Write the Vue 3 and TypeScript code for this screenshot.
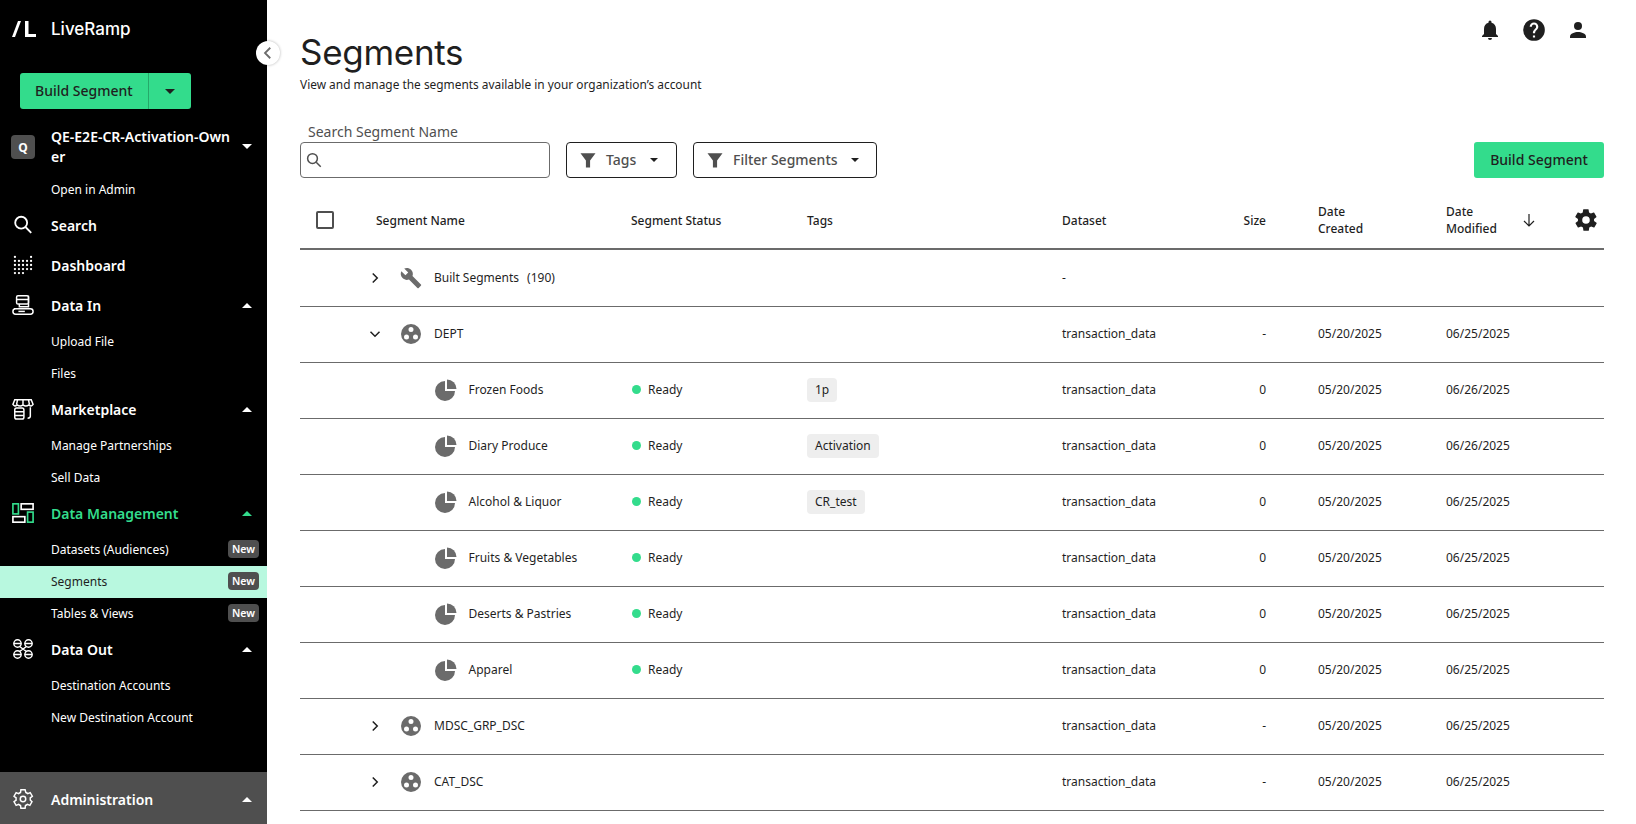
<script setup lang="ts">
interface SubItem { label: string; isNew?: boolean; active?: boolean }
interface Section { label: string; icon: string; items: SubItem[]; green?: boolean }
interface Row {
  name: string; kind: 'tool' | 'group' | 'pie'; open?: boolean; child?: boolean; count?: string;
  status?: string; tag?: string; dataset: string; size?: string; created?: string; modified?: string;
}

const sections: Section[] = [
  { label: 'Data In', icon: 'in', items: [{ label: 'Upload File' }, { label: 'Files' }] },
  { label: 'Marketplace', icon: 'market', items: [{ label: 'Manage Partnerships' }, { label: 'Sell Data' }] },
  {
    label: 'Data Management', icon: 'mgmt', green: true,
    items: [
      { label: 'Datasets (Audiences)', isNew: true },
      { label: 'Segments', isNew: true, active: true },
      { label: 'Tables & Views', isNew: true },
    ],
  },
  { label: 'Data Out', icon: 'out', items: [{ label: 'Destination Accounts' }, { label: 'New Destination Account' }] },
]

const dashDots: [number, number][] = []
const dashRows = [[1, 5], [1, 2, 3, 4, 5], [1, 2, 3, 4, 5], [1, 2, 3, 4, 5], [1, 2, 3]]
dashRows.forEach((cols, r) => cols.forEach((c) => dashDots.push([c * 4.4 - 1.2, r * 4.4 + 3.200])))

const d = 'transaction_data'
const rows: Row[] = [
  { name: 'Built Segments', count: '(190)', kind: 'tool', dataset: '-' },
  { name: 'DEPT', kind: 'group', open: true, dataset: d, size: '-', created: '05/20/2025', modified: '06/25/2025' },
  { name: 'Frozen Foods', kind: 'pie', child: true, status: 'Ready', tag: '1p', dataset: d, size: '0', created: '05/20/2025', modified: '06/26/2025' },
  { name: 'Diary Produce', kind: 'pie', child: true, status: 'Ready', tag: 'Activation', dataset: d, size: '0', created: '05/20/2025', modified: '06/26/2025' },
  { name: 'Alcohol & Liquor', kind: 'pie', child: true, status: 'Ready', tag: 'CR_test', dataset: d, size: '0', created: '05/20/2025', modified: '06/25/2025' },
  { name: 'Fruits & Vegetables', kind: 'pie', child: true, status: 'Ready', dataset: d, size: '0', created: '05/20/2025', modified: '06/25/2025' },
  { name: 'Deserts & Pastries', kind: 'pie', child: true, status: 'Ready', dataset: d, size: '0', created: '05/20/2025', modified: '06/25/2025' },
  { name: 'Apparel', kind: 'pie', child: true, status: 'Ready', dataset: d, size: '0', created: '05/20/2025', modified: '06/25/2025' },
  { name: 'MDSC_GRP_DSC', kind: 'group', dataset: d, size: '-', created: '05/20/2025', modified: '06/25/2025' },
  { name: 'CAT_DSC', kind: 'group', dataset: d, size: '-', created: '05/20/2025', modified: '06/25/2025' },
]
</script>

<template>
  <div class="page">
    <aside class="sidebar">
      <div class="brand">
        <svg class="logo" viewBox="0 0 24 16" width="24" height="16">
          <path d="M0 16 L6 0 H9 L3 16 Z" fill="#fff" />
          <path d="M13 0 H16.500 V13 H24 V16 H13 Z" fill="#fff" />
        </svg>
        <span class="brand-name">LiveRamp</span>
      </div>

      <div class="split-btn">
        <span class="split-label">Build Segment</span>
        <span class="split-caret"><i class="caret dark"></i></span>
      </div>

      <div class="org">
        <span class="org-badge">Q</span>
        <span class="org-name">QE-E2E-CR-Activation-Own<br />er</span>
        <i class="caret white org-caret"></i>
      </div>
      <a class="sub">Open in Admin</a>

      <div class="head">
        <svg class="nav-icon" viewBox="0 0 24 24" fill="none" stroke="#fff" stroke-width="2">
          <circle cx="10" cy="9.500" r="6.500" /><path d="M14.700 14.200 L21 20.500" />
        </svg>
        <span>Search</span>
      </div>
      <div class="head">
        <svg class="nav-icon" viewBox="0 0 24 24" fill="#fff">
          <circle v-for="(p, i) in dashDots" :key="i" :cx="p[0]" :cy="p[1]" r="1.250" />
        </svg>
        <span>Dashboard</span>
      </div>

      <template v-for="s in sections" :key="s.label">
        <div class="head" :class="{ green: s.green }">
          <svg v-if="s.icon === 'in'" class="nav-icon" viewBox="0 0 24 24" fill="none" stroke="#fff" stroke-width="1.600">
            <rect x="5" y="2" width="13" height="9" rx="1.500" />
            <path d="M5 6 H18 M8 11 V14 H18 V2" />
            <path d="M2 16 H20 Q23 16 23 19 Q23 22 20 22 H4 Q1 22 1 19 Q1 16 4 16" />
            <path d="M7 19 H14" />
          </svg>
          <svg v-else-if="s.icon === 'market'" class="nav-icon" viewBox="0 0 24 24" fill="none" stroke="#fff" stroke-width="1.600">
            <path d="M3 2 H21 L23 7 Q21 10 18.500 7.500 Q15 10 12 7.500 Q9 10 5.500 7.500 Q3 10 1 7 Z" />
            <path d="M6 2 L5 7 M12 2 V7 M18 2 L19 7" />
            <path d="M20 10 V20 Q20 22 17 22" />
            <rect x="3" y="11" width="10" height="12" rx="2" />
            <path d="M3 15 H13 M3 19 H13" />
          </svg>
          <svg v-else-if="s.icon === 'mgmt'" class="nav-icon" viewBox="0 0 24 24" fill="none" stroke-width="1.800">
            <rect x="1" y="2" width="6" height="11" stroke="#33dc8c" />
            <rect x="10" y="2" width="13" height="6" stroke="#fff" />
            <rect x="1" y="16" width="13" height="6" stroke="#fff" />
            <rect x="17" y="11" width="6" height="11" stroke="#33dc8c" />
          </svg>
          <svg v-else class="nav-icon" viewBox="0 0 24 24" fill="none" stroke="#fff" stroke-width="1.600">
            <circle cx="6" cy="6" r="4" /><circle cx="18" cy="6" r="4" />
            <circle cx="6" cy="18" r="4" /><circle cx="18" cy="18" r="4" />
            <path d="M2 6 H10 M14 6 H22 M2 18 H10 M14 18 H22 M8 9 L12 12 L16 9 M8 15 L12 12 L16 15" />
          </svg>
          <span>{{ s.label }}</span>
          <i class="caret up" :class="s.green ? 'greenc' : 'white'"></i>
        </div>
        <a v-for="it in s.items" :key="it.label" class="sub" :class="{ active: it.active }">
          {{ it.label }}
          <b v-if="it.isNew" class="new">New</b>
        </a>
      </template>

      <div class="head admin">
        <svg class="nav-icon" viewBox="0 0 24 24" fill="none" stroke="#fff" stroke-width="1.600">
          <path d="M19.900 13.200a8 8 0 0 0 0-2.400l2.300-1.800-2.300-4-2.700 1.100a8 8 0 0 0-2.100-1.200L14.300 2H9.700l-.4 2.900a8 8 0 0 0-2.100 1.200L4.500 5l-2.300 4 2.300 1.800a8 8 0 0 0 0 2.400L2.200 15l2.300 4 2.700-1.100a8 8 0 0 0 2.100 1.200l.4 2.900h4.600l.4-2.900a8 8 0 0 0 2.100-1.200l2.700 1.100 2.300-4z" />
          <circle cx="12" cy="12" r="3" />
        </svg>
        <span>Administration</span>
        <i class="caret up white"></i>
      </div>
    </aside>

    <button class="collapse" aria-label="Collapse">
      <svg viewBox="0 0 24 24" width="18" height="18" fill="none" stroke="#6b6b6b" stroke-width="2.400">
        <path d="M15 5 L8 12 L15 19" />
      </svg>
    </button>

    <main class="main">
      <div class="top-icons">
        <svg viewBox="0 0 24 24" width="24" height="24" fill="#1f1f1f">
          <path d="M12 22a2 2 0 0 0 2-2h-4a2 2 0 0 0 2 2zm6-6v-5c0-3.100-1.600-5.600-4.500-6.300V4a1.500 1.500 0 0 0-3 0v.7C7.600 5.400 6 7.900 6 11v5l-2 2v1h16v-1z" />
        </svg>
        <svg viewBox="0 0 24 24" width="26" height="26" fill="#1f1f1f">
          <path d="M12 2a10 10 0 1 0 0 20 10 10 0 0 0 0-20zm1 17h-2v-2h2zm2.100-7.700-.9.900c-.7.700-1.200 1.300-1.200 2.800h-2v-.5c0-1.100.5-2.100 1.200-2.800l1.200-1.300c.4-.3.600-.8.600-1.400a2 2 0 0 0-4 0H8a4 4 0 0 1 8 0c0 .9-.4 1.700-.9 2.300z" />
        </svg>
        <svg viewBox="0 0 24 24" width="24" height="24" fill="#1f1f1f">
          <circle cx="12" cy="8" r="4" /><path d="M12 14c-3.300 0-8 1.700-8 4.500V20h16v-1.500c0-2.800-4.700-4.500-8-4.500z" />
        </svg>
      </div>

      <h1 class="title">Segments</h1>
      <p class="subtitle">View and manage the segments available in your organization’s account</p>

      <label class="search-label">Search Segment Name</label>
      <div class="toolbar">
        <div class="search">
          <svg viewBox="0 0 24 24" width="18" height="18" fill="none" stroke="#4f4f4f" stroke-width="2">
            <circle cx="10" cy="10" r="6.500" /><path d="M15 15 L21 21" />
          </svg>
        </div>
        <button class="filter tags-btn">
          <svg viewBox="0 0 24 24" width="20" height="20" fill="#4f4f4f"><path d="M3 4 H21 L14.500 12.500 V21 H9.500 V12.500 Z" /></svg>
          <span>Tags</span><i class="caret small"></i>
        </button>
        <button class="filter seg-btn">
          <svg viewBox="0 0 24 24" width="20" height="20" fill="#4f4f4f"><path d="M3 4 H21 L14.500 12.500 V21 H9.500 V12.500 Z" /></svg>
          <span>Filter Segments</span><i class="caret small"></i>
        </button>
        <button class="build">Build Segment</button>
      </div>

      <div class="row header">
        <div class="h-name"><span class="check"></span><span>Segment Name</span></div>
        <div>Segment Status</div>
        <div>Tags</div>
        <div>Dataset</div>
        <div class="num">Size</div>
        <div class="two">Date<br />Created</div>
        <div class="h-mod">
          <span class="two">Date<br />Modified</span>
          <svg class="arrow" viewBox="0 0 16 16" width="16" height="16" fill="none" stroke="#1f1f1f" stroke-width="1.200"><path d="M8 2 V14 M3 9 L8 14 L13 9" /></svg>
          <svg class="gear" viewBox="0 0 24 24" width="26" height="26" fill="#1f1f1f">
            <path d="M19.400 13a7.500 7.500 0 0 0 0-2l2.100-1.600a.5.500 0 0 0 .1-.6l-2-3.500a.5.500 0 0 0-.6-.2l-2.500 1a7.500 7.500 0 0 0-1.700-1l-.4-2.700a.5.500 0 0 0-.5-.4h-4a.5.500 0 0 0-.5.400l-.4 2.700a7.500 7.500 0 0 0-1.700 1l-2.500-1a.5.500 0 0 0-.6.200l-2 3.500a.5.500 0 0 0 .1.600L4.600 11a7.500 7.500 0 0 0 0 2l-2.100 1.600a.5.500 0 0 0-.1.600l2 3.500a.5.500 0 0 0 .6.200l2.500-1a7.500 7.500 0 0 0 1.700 1l.4 2.700a.5.500 0 0 0 .5.400h4a.5.500 0 0 0 .5-.4l.4-2.700a7.500 7.500 0 0 0 1.700-1l2.500 1a.5.500 0 0 0 .6-.2l2-3.500a.5.500 0 0 0-.1-.6zM12 15.500a3.500 3.500 0 1 1 0-7 3.500 3.500 0 0 1 0 7z" />
          </svg>
        </div>
      </div>

      <div v-for="r in rows" :key="r.name" class="row body">
        <div class="cell-name" :class="{ child: r.child }">
          <svg v-if="!r.child" class="chev" viewBox="0 0 24 24" width="18" height="18" fill="none" stroke="#1f1f1f" stroke-width="2">
            <path v-if="r.open" d="M6 9 L12 15 L18 9" />
            <path v-else d="M9 6 L15 12 L9 18" />
          </svg>
          <svg v-if="r.kind === 'tool'" class="kind" viewBox="-2 -2 28 28" fill="#6b6b6b">
            <path d="M22.700 19l-9.100-9.100c.9-2.300.4-5-1.500-6.900-2-2-5-2.400-7.400-1.300L9 6 6 9 1.600 4.700C.4 7.100.9 10.100 2.900 12.100c1.900 1.900 4.600 2.400 6.900 1.500l9.100 9.100c.4.400 1 .4 1.400 0l2.300-2.300c.5-.4.5-1.100.1-1.400z" />
          </svg>
          <svg v-else-if="r.kind === 'group'" class="kind" viewBox="-1 -1 26 26" fill="#6b6b6b">
            <path fill-rule="evenodd" d="M12 2a10 10 0 1 0 0 20 10 10 0 0 0 0-20zm0 3a2.500 2.500 0 1 1 0 5 2.500 2.500 0 0 1 0-5zM7.500 12.500a2.500 2.500 0 1 1 0 5 2.500 2.500 0 0 1 0-5zm9 0a2.500 2.500 0 1 1 0 5 2.500 2.500 0 0 1 0-5z" />
          </svg>
          <svg v-else class="kind" viewBox="-1 -1 26 26" fill="#6b6b6b">
            <path d="M11 3 A10 10 0 1 0 21 13 H11 Z" />
            <path d="M13 1.500 A9.500 9.500 0 0 1 22.500 11 H13 Z" />
          </svg>
          <span>{{ r.name }}</span>
          <span v-if="r.count" class="count">{{ r.count }}</span>
        </div>
        <div class="status"><i v-if="r.status" class="dot"></i>{{ r.status }}</div>
        <div><span v-if="r.tag" class="tag">{{ r.tag }}</span></div>
        <div>{{ r.dataset }}</div>
        <div class="num">{{ r.size }}</div>
        <div class="created">{{ r.created }}</div>
        <div>{{ r.modified }}</div>
      </div>
    </main>
  </div>
</template>

<style>
html, body { margin: 0; padding: 0; background: #fff; overflow: hidden; }
</style>

<style scoped>
* { box-sizing: border-box; }
.page {
  position: relative;
  display: flex;
  width: 1636px;
  height: 824px;
  overflow: hidden;
  font-family: "Noto Sans", "Open Sans", sans-serif;
  color: #1f1f1f;
}
.sidebar {
  width: 267px;
  flex: none;
  height: 824px;
  background: #000;
  color: #fff;
  display: flex;
  flex-direction: column;
}
.brand { display: flex; align-items: center; height: 58px; padding-left: 12px; }
.logo { flex: none; }
.brand-name { margin-left: 15px; font: 500 17px/1 Inter, sans-serif; }
.split-btn {
  margin: 15px 0 0 20px;
  width: 171px;
  height: 36px;
  display: flex;
  background: #33dc8c;
  border-radius: 3px;
  color: #1f1f1f;
  font-size: 14px;
}
.split-label { width: 129px; display: flex; align-items: center; padding: 0 0 1px 15px; font-weight: 500; border-right: 1px solid #25a96a; }
.split-caret { flex: 1; display: flex; align-items: center; justify-content: center; }
.caret { display: inline-block; width: 0; height: 0; border-left: 5px solid transparent; border-right: 5px solid transparent; border-top: 5px solid #1f1f1f; }
.caret.up { border-top: 0; border-bottom: 5px solid #fff; margin-left: auto; }
.caret.white { border-top-color: #fff; }
.caret.up.white { border-bottom-color: #fff; }
.caret.up.greenc { border-bottom-color: #33dc8c; }
.caret.small { border-left-width: 4px; border-right-width: 4px; border-top-width: 4px; border-top-color: #1f1f1f; }
.org { display: flex; position: relative; padding: 18px 15px 0 11px; height: 65px; }
.org-badge {
  width: 24px; height: 24px; margin-top: 8px; flex: none;
  background: #4f4f4f; border-radius: 4px;
  display: flex; align-items: center; justify-content: center;
  font-weight: 700; font-size: 12px;
}
.org-name { margin-left: 16px; font-size: 14px; line-height: 20px; font-weight: 600; white-space: nowrap; }
.org-caret { margin-left: auto; margin-top: 17px; }
.head {
  height: 40px;
  display: flex;
  align-items: center;
  padding: 0 15px 2px 12px;
  font-size: 14px;
  font-weight: 600;
  flex: none;
}
.head > span { margin-left: 17px; }
.nav-icon { width: 22px; height: 22px; flex: none; }
.head.green { color: #33dc8c; }
.head.admin { margin-top: auto; height: 52px; background: #4f4f4f; padding-top: 4px; }
.sub {
  height: 32px;
  flex: none;
  display: flex;
  align-items: center;
  justify-content: space-between;
  padding: 0 8px 2px 51px;
  font-size: 12px;
  color: #fff;
}
.sub.active { background: #b8f8df; color: #1f1f1f; }
.new {
  width: 31px; height: 18px;
  background: #4f4f4f; color: #fff;
  border-radius: 4px;
  font-size: 10.500px;
  font-weight: 600;
  display: flex; align-items: center; justify-content: center;
}
.collapse {
  position: absolute;
  left: 256px; top: 41px;
  width: 24px; height: 24px;
  border: 0; padding: 0;
  border-radius: 50%;
  background: #fff;
  box-shadow: 0 0 3px rgba(0,0,0,.3);
  display: flex; align-items: center; justify-content: center;
}
.main { flex: 1; padding: 0 32px 0 33px; position: relative; min-width: 0; }
.top-icons {
  position: absolute; right: 46px; top: 17px;
  display: flex; align-items: center; gap: 19px;
}
.title { margin: 0; padding-top: 30px; font: 400 35px/44px Inter, sans-serif; letter-spacing: -0.3px; color: #1f1f1f; }
.subtitle { margin: 1px 0 0; font-size: 11.900px; line-height: 18px; }
.search-label { display: block; margin: 29px 0 0 8px; font-size: 14px; line-height: 20px; color: #4f4f4f; }
.toolbar { display: flex; align-items: stretch; height: 36px; }
.search {
  width: 250px;
  border: 1px solid #6b6b6b; border-radius: 4px;
  display: flex; align-items: center; padding-left: 4px;
}
.filter {
  display: flex; align-items: center;
  background: #fff;
  border: 1px solid #1f1f1f; border-radius: 4px;
  font-family: inherit; font-size: 14px; font-weight: 500;
  color: #4f4f4f;
  padding: 0 11px 1px;
}
.filter span { margin: 0 13.500px 0 8px; }
.tags-btn { width: 111px; margin-left: 16px; }
.seg-btn { width: 184px; margin-left: 16px; }
.build {
  margin-left: auto;
  width: 130px;
  border: 0; border-radius: 3px;
  background: #33dc8c;
  color: #1f1f1f;
  font-family: inherit; font-size: 14px; font-weight: 500;
  padding: 0 0 2px;
}
.row {
  display: grid;
  grid-template-columns: 331px 176px 255px 138px 66px 180px 158px;
  align-items: center;
  font-size: 12px;
  border-bottom: 1px solid #6b6b6b;
  white-space: nowrap;
}
.row > div:nth-child(6) { padding-left: 52px; }
.header { height: 72px; padding-top: 14px; margin-bottom: 1px; border-bottom: 2px solid #6b6b6b; font-weight: 500; }
.h-name { display: flex; align-items: center; padding-left: 16px; }
.check { width: 18px; height: 18px; border: 2px solid #4f4f4f; border-radius: 2px; margin-right: 42px; }
.two { line-height: 17px; }
.h-mod { display: flex; align-items: center; position: relative; }
.arrow { position: absolute; left: 75px; top: 50%; transform: translateY(-50%); }
.gear { position: absolute; left: 127px; top: 50%; transform: translateY(-50%); }
.num { text-align: right; }
.body { height: 56px; padding-bottom: 2px; }
.cell-name { display: flex; align-items: center; padding-left: 66px; }
.cell-name.child { padding-left: 133px; }
.chev { flex: none; margin-right: 14px; }
.kind { width: 26px; height: 26px; flex: none; margin-right: 10px; }
.child .kind { margin-right: 9.500px; }
.count { margin-left: 8px; }
.status { display: flex; align-items: center; padding-left: 1px; }
.dot { width: 9px; height: 9px; border-radius: 50%; background: #33dc8c; margin-right: 7px; }
.tag {
  display: inline-block;
  background: #eeeeee;
  border-radius: 4px;
  padding: 0 8px;
  line-height: 24px;
  height: 24px;
}
</style>
